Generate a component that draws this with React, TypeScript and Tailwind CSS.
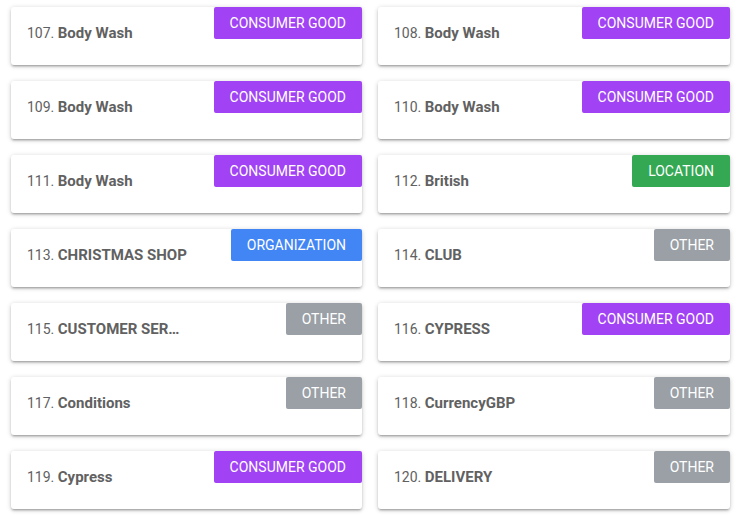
import React from "react";

type Item = { n: number; title: string; tag: string };

const items: Item[] = [
  { n: 107, title: "Body Wash", tag: "CONSUMER GOOD" },
  { n: 108, title: "Body Wash", tag: "CONSUMER GOOD" },
  { n: 109, title: "Body Wash", tag: "CONSUMER GOOD" },
  { n: 110, title: "Body Wash", tag: "CONSUMER GOOD" },
  { n: 111, title: "Body Wash", tag: "CONSUMER GOOD" },
  { n: 112, title: "British", tag: "LOCATION" },
  { n: 113, title: "CHRISTMAS SHOP", tag: "ORGANIZATION" },
  { n: 114, title: "CLUB", tag: "OTHER" },
  { n: 115, title: "CUSTOMER SER…", tag: "OTHER" },
  { n: 116, title: "CYPRESS", tag: "CONSUMER GOOD" },
  { n: 117, title: "Conditions", tag: "OTHER" },
  { n: 118, title: "CurrencyGBP", tag: "OTHER" },
  { n: 119, title: "Cypress", tag: "CONSUMER GOOD" },
  { n: 120, title: "DELIVERY", tag: "OTHER" },
];

const tagClass: Record<string, string> = {
  "CONSUMER GOOD": "bg-[#a142f4]",
  LOCATION: "bg-[#34a853]",
  ORGANIZATION: "bg-[#4285f4]",
  OTHER: "bg-[#9aa0a6]",
};

export default function App() {
  return (
    <div
      className="w-[742px] h-[516px] bg-white pl-[11px] pr-[12px] pt-[7px] overflow-hidden"
      style={{ fontFamily: "Roboto, 'Liberation Sans', sans-serif" }}
    >
      <div className="grid grid-cols-[351px_352px] gap-x-[16px] gap-y-[16px]">
        {items.map((it) => (
          <div
            key={it.n}
            className="relative h-[58px] bg-white rounded-[3px] shadow-[0_2px_2px_0_rgba(0,0,0,0.14),0_3px_1px_-2px_rgba(0,0,0,0.12),0_1px_5px_0_rgba(0,0,0,0.2)] flex items-start"
          >
            <div className="pl-[16px] pt-[15px] text-[15px] leading-[22px] text-[#616161] whitespace-nowrap">
              <span className="text-[14px]">{it.n}. </span>
              <span className="font-bold">{it.title}</span>
            </div>
            <div
              className={`absolute top-0 right-0 h-[32px] px-[16px] flex items-center text-[14px] text-white rounded-[2px] ${tagClass[it.tag]}`}
            >
              <span>{it.tag}</span>
            </div>
          </div>
        ))}
      </div>
    </div>
  );
}
